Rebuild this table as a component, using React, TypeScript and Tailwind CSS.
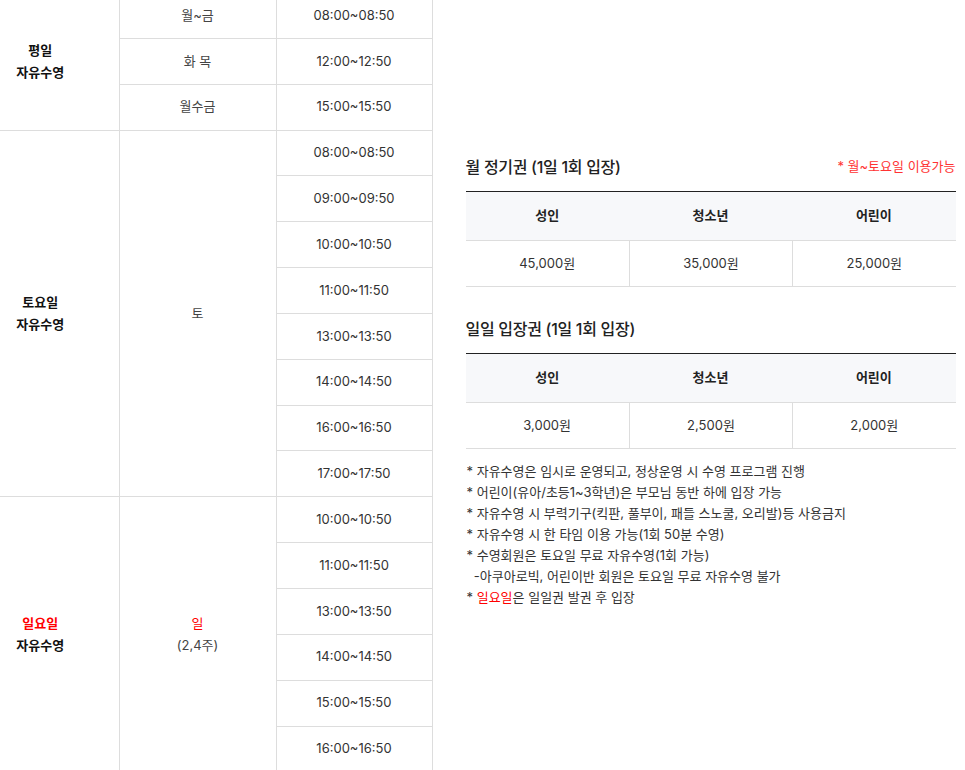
import React from 'react';

type Group = { label: React.ReactNode; day: React.ReactNode; times: string[]; days?: string[] };

const GROUPS: Group[] = [
  {
    label: <>평일<br />자유수영</>,
    day: null,
    days: ['월~금', '화 목', '월수금'],
    times: ['08:00~08:50', '12:00~12:50', '15:00~15:50'],
  },
  {
    label: <>토요일<br />자유수영</>,
    day: '토',
    times: ['08:00~08:50', '09:00~09:50', '10:00~10:50', '11:00~11:50', '13:00~13:50', '14:00~14:50', '16:00~16:50', '17:00~17:50'],
  },
  {
    label: <><span className="text-[#ff0000]">일요일</span><br />자유수영</>,
    day: <><span className="text-[#ff0000]">일</span><br />(2,4주)</>,
    times: ['10:00~10:50', '11:00~11:50', '13:00~13:50', '14:00~14:50', '15:00~15:50', '16:00~16:50'],
  },
];

const PRICES = [
  { title: '월 정기권 (1일 1회 입장)', note: '* 월~토요일 이용가능', values: ['45,000원', '35,000원', '25,000원'] },
  { title: '일일 입장권 (1일 1회 입장)', note: null, values: ['3,000원', '2,500원', '2,000원'] },
];

const NOTES: React.ReactNode[] = [
  '* 자유수영은 임시로 운영되고, 정상운영 시 수영 프로그램 진행',
  '* 어린이(유아/초등1~3학년)은 부모님 동반 하에 입장 가능',
  '* 자유수영 시 부력기구(킥판, 풀부이, 패들 스노쿨, 오리발)등 사용금지',
  '* 자유수영 시 한 타임 이용 가능(1회 50분 수영)',
  '* 수영회원은 토요일 무료 자유수영(1회 가능)',
  '\u00a0\u00a0-아쿠아로빅, 어린이반 회원은 토요일 무료 자유수영 불가',
  <>* <span className="text-[#ff0000]">일요일</span>은 일일권 발권 후 입장</>,
];

const ScheduleTable: React.FC = () => (
  <table className="w-[470px] shrink-0 border-collapse text-[13px] text-[#333] text-center table-fixed">
    <colgroup>
      <col className="w-[157px]" />
      <col className="w-[157px]" />
      <col className="w-[156px]" />
    </colgroup>
    <tbody>
      {GROUPS.map((g, gi) =>
        g.times.map((t, i) => (
          <tr key={`${gi}-${i}`} className="h-[45.85px]">
            {i === 0 && (
              <td rowSpan={g.times.length} className="border border-[#dddddd] border-l-0 font-bold text-[#111] leading-[22px]">
                {g.label}
              </td>
            )}
            {g.days ? (
              <td className="border border-[#dddddd] text-[#444]">{g.days[i]}</td>
            ) : (
              i === 0 && (
                <td rowSpan={g.times.length} className="border border-[#dddddd] text-[#444] leading-[22px]">
                  {g.day}
                </td>
              )
            )}
            <td className="border border-[#dddddd] text-[#333]">{t}</td>
          </tr>
        ))
      )}
    </tbody>
  </table>
);

const App: React.FC = () => {
  return (
    <div className="min-h-screen bg-white overflow-hidden font-['Inter','Noto_Sans_CJK_KR',sans-serif]">
      <div className="flex gap-[33px] -ml-[38px] -mt-[8px]">
        <ScheduleTable />

        <div className="w-[490px] shrink-0 pt-[163px]">
          {PRICES.map((p, pi) => (
            <div key={pi} className={pi > 0 ? 'mt-[30px]' : ''}>
              <div className="flex items-center justify-between mb-3 h-6">
                <h3 className="text-[16px] font-medium tracking-[-0.3px] text-[#222] leading-6">{p.title}</h3>
                {p.note && <span className="text-[13px] text-[#ff3333]">{p.note}</span>}
              </div>
              <div className="border-t border-[#222]">
                <div className="grid grid-cols-3 h-[49px] bg-[#f7f8fa] border-b border-[#dddddd] items-center text-center text-[13px] font-bold text-[#222]">
                  <span>성인</span>
                  <span>청소년</span>
                  <span>어린이</span>
                </div>
                <div className="grid grid-cols-3 h-[46px] border-b border-[#dddddd] text-center text-[13px] text-[#333]">
                  {p.values.map((v, vi) => (
                    <div key={vi} className={`flex items-center justify-center ${vi > 0 ? 'border-l border-[#dddddd]' : ''}`}>
                      {v}
                    </div>
                  ))}
                </div>
              </div>
            </div>
          ))}

          <ul className="mt-3 text-[13px] leading-[21px] text-[#333]">
            {NOTES.map((n, i) => (
              <li key={i} className="pl-px">{n}</li>
            ))}
          </ul>
        </div>
      </div>
    </div>
  );
};

export default App;
